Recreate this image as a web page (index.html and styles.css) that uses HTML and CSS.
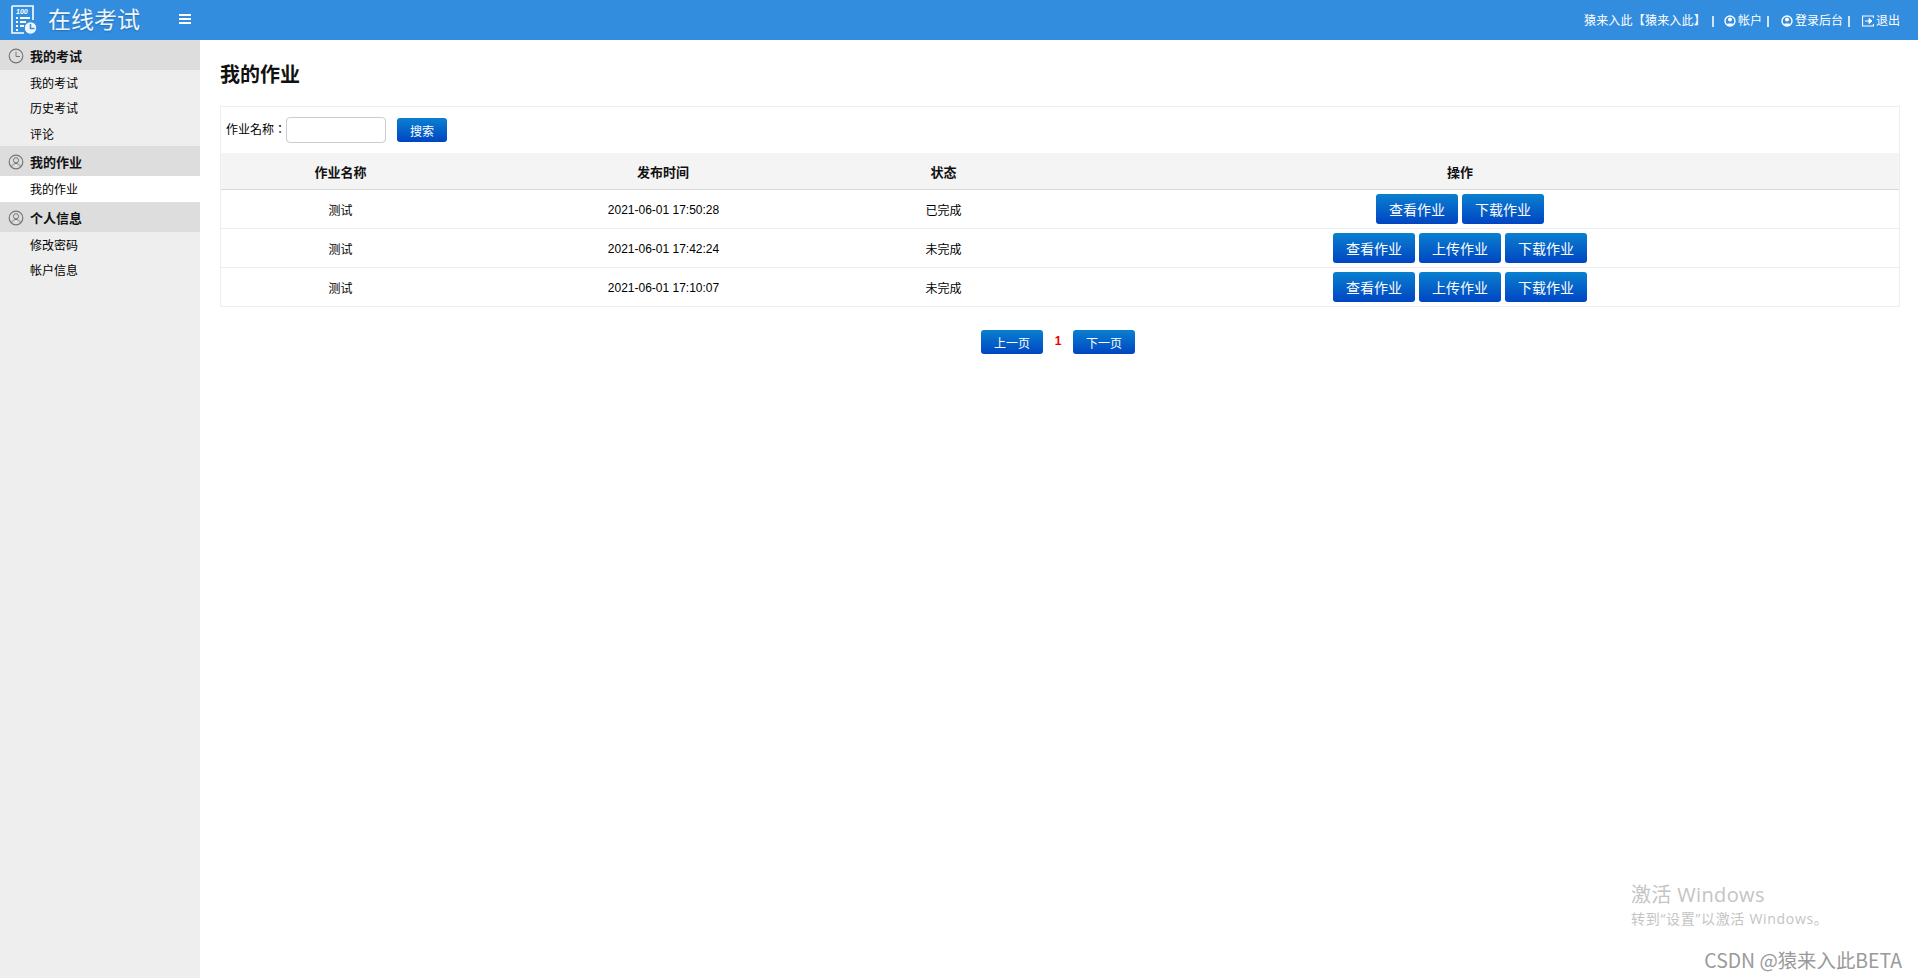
FILE: index.html
```html
<!DOCTYPE html>
<html lang="zh-CN">
<head>
<meta charset="utf-8">
<title>在线考试</title>
<link rel="stylesheet" href="styles.css">
</head>
<body>
<header class="topbar">
  <div class="brand">
    <svg class="logo" viewBox="0 0 26 30" width="26" height="30" aria-hidden="true">
      <path d="M1 1H22V15M13 28H1V1" fill="none" stroke="#fff" stroke-width="1.600"/>
      <text class="logo-score" x="5" y="9">100</text>
      <path d="M5 13h2M9 13h10M5 17h2M9 17h6M5 21h2M9 21h4M5 25h2" stroke="#fff" stroke-width="2" fill="none"/>
      <circle cx="19.500" cy="23" r="6.200" fill="#eef6fd" stroke="#338ddf" stroke-width="1"/>
      <path d="M19.500 19V23.500H23.500" fill="none" stroke="#338ddf" stroke-width="1.500"/>
    </svg>
    <span class="brand-name">在线考试</span>
    <svg class="menu-toggle" viewBox="0 0 12 10" width="12" height="10" aria-hidden="true">
      <path d="M0 1h12M0 5h12M0 9h12" stroke="#fff" stroke-width="2"/>
    </svg>
  </div>
  <nav class="userbar">
    <span class="user-name">猿来入此【猿来入此】</span><i class="sep"></i>
    <a><svg class="uicon" viewBox="0 0 12 12"><circle cx="6" cy="6" r="5" fill="none" stroke="#fff" stroke-width="1.400"/><circle cx="6" cy="4.500" r="2" fill="#fff"/><path d="M3.500 10.500V8.500h5v2" fill="#fff"/></svg>帐户</a><i class="sep near"></i>
    <a><svg class="uicon" viewBox="0 0 12 12"><circle cx="6" cy="6" r="5" fill="none" stroke="#fff" stroke-width="1.400"/><circle cx="6" cy="4.500" r="2" fill="#fff"/><path d="M3.500 10.500V8.500h5v2" fill="#fff"/></svg>登录后台</a><i class="sep near"></i>
    <a><svg class="uicon" viewBox="0 0 12 12"><path d="M11.500 3V1H.5V11H11.500V9" fill="none" stroke="#fff" stroke-width="1.200"/><path d="M3 6h5M7 3.500L10 6 7 8.500z" stroke="#fff" fill="#fff"/></svg>退出</a>
  </nav>
</header>
<div class="shell">
  <aside class="sidebar">
    <div class="side-head">
      <svg class="side-icon" viewBox="0 0 16 16"><circle cx="8" cy="8" r="6.800" fill="none" stroke="#777" stroke-width="1.200"/><path d="M8 3.500V8.500H12" fill="none" stroke="#777" stroke-width="1"/></svg>
      我的考试
    </div>
    <a class="side-item">我的考试</a>
    <a class="side-item">历史考试</a>
    <a class="side-item">评论</a>
    <div class="side-head">
      <svg class="side-icon" viewBox="0 0 16 16"><circle cx="8" cy="8" r="6.800" fill="none" stroke="#777" stroke-width="1.200"/><circle cx="8" cy="6.300" r="2.600" fill="none" stroke="#777" stroke-width="1"/><path d="M3.500 13c.6-2.300 2.500-3.500 4.500-3.500s3.900 1.200 4.500 3.500" fill="none" stroke="#777" stroke-width="1"/></svg>
      我的作业
    </div>
    <a class="side-item active">我的作业</a>
    <div class="side-head">
      <svg class="side-icon" viewBox="0 0 16 16"><circle cx="8" cy="8" r="6.800" fill="none" stroke="#777" stroke-width="1.200"/><circle cx="8" cy="6.300" r="2.600" fill="none" stroke="#777" stroke-width="1"/><path d="M3.500 13c.6-2.300 2.500-3.500 4.500-3.500s3.900 1.200 4.500 3.500" fill="none" stroke="#777" stroke-width="1"/></svg>
      个人信息
    </div>
    <a class="side-item">修改密码</a>
    <a class="side-item">帐户信息</a>
  </aside>
  <main class="content">
    <h1 class="title">我的作业</h1>
    <div class="panel">
      <form class="search">
        <label class="search-label" lang="zh-TW">作业名称：</label>
        <input class="search-input" type="text">
        <button class="btn btn-search" type="button">搜索</button>
      </form>
      <table class="grid">
        <colgroup>
          <col class="c-name"><col class="c-time"><col class="c-state"><col class="c-ops">
        </colgroup>
        <thead>
          <tr><th>作业名称</th><th>发布时间</th><th>状态</th><th>操作</th></tr>
        </thead>
        <tbody>
          <tr>
            <td>测试</td><td class="when">2021-06-01 17:50:28</td><td>已完成</td>
            <td class="ops"><div class="ops-row"><button class="btn btn-op" type="button">查看作业</button><button class="btn btn-op" type="button">下载作业</button></div></td>
          </tr>
          <tr>
            <td>测试</td><td class="when">2021-06-01 17:42:24</td><td>未完成</td>
            <td class="ops"><div class="ops-row"><button class="btn btn-op" type="button">查看作业</button><button class="btn btn-op" type="button">上传作业</button><button class="btn btn-op" type="button">下载作业</button></div></td>
          </tr>
          <tr>
            <td>测试</td><td class="when">2021-06-01 17:10:07</td><td>未完成</td>
            <td class="ops"><div class="ops-row"><button class="btn btn-op" type="button">查看作业</button><button class="btn btn-op" type="button">上传作业</button><button class="btn btn-op" type="button">下载作业</button></div></td>
          </tr>
        </tbody>
      </table>
    </div>
    <div class="pager">
      <button class="btn btn-page" type="button">上一页</button>
      <span class="page-no">1</span>
      <button class="btn btn-page" type="button">下一页</button>
    </div>
  </main>
</div>
<div class="activate">
  <div class="activate-title">激活 Windows</div>
  <div class="activate-sub">转到“设置”以激活 Windows。</div>
</div>
<div class="credit">CSDN @猿来入此BETA</div>
</body>
</html>
```
FILE: styles.css
```css
* { box-sizing: border-box; }
html, body { height: 100%; }
body {
  margin: 0;
  height: 978px;
  overflow: hidden;
  background: #fff;
  color: #000;
  font: 12px/1.5 "Liberation Sans", "Noto Sans CJK SC", sans-serif;
  display: flex;
  flex-direction: column;
}
.topbar {
  height: 40px;
  flex: none;
  background: #338ddf;
  color: #fff;
  display: flex;
  justify-content: space-between;
  align-items: center;
  padding: 0 18px 0 11px;
}
.brand { display: flex; align-items: center; }
.logo { margin-right: 11px; }
.logo-score { font: italic 700 7px "Liberation Sans", sans-serif; fill: #fff; }
.brand-name {
  font-size: 23px;
  line-height: 40px;
  width: 131px;
  color: #eef6fd;
  text-shadow: 0 1px 2px rgba(0,0,0,.25);
}
.menu-toggle { margin-top: -2px; }
.userbar { display: flex; align-items: center; font-size: 12px; line-height: 16px; padding-top: 2px; }
.userbar a { display: flex; align-items: center; color: #fff; }
.user-name { letter-spacing: .2px; }
.uicon { width: 12px; height: 12px; margin-right: 2px; }
.sep { width: 2px; height: 11px; background: #cfe6fa; margin: 0 10px 0 6px; }
.sep.near { margin: 0 12px 0 5px; }
.shell { flex: 1; display: flex; min-height: 0; }
.sidebar { width: 200px; flex: none; background: #eee; }
.side-head {
  height: 30px;
  background: #ddd;
  display: flex;
  align-items: center;
  padding: 3px 0 0 8px;
  font-size: 13px;
  font-weight: 700;
  color: #111;
}
.side-icon { width: 16px; height: 16px; margin: -1px 6px 0 0; }
.side-item {
  display: block;
  height: 25.33px;
  line-height: 25px;
  padding: 2px 0 0 30px;
}
.side-item.active { background: #fff; height: 26px; }
.content { flex: 1; padding: 0 18px 0 20px; min-width: 0; }
.title {
  margin: 0;
  height: 66px;
  padding-top: 21px;
  font-size: 20px;
  line-height: 28px;
  font-weight: 700;
  color: #111;
}
.panel { border: 1px solid #eee; }
.search {
  height: 46px;
  display: flex;
  align-items: center;
  padding-left: 5px;
  margin: 0;
}
.search-label { white-space: nowrap; font-family: "Liberation Sans", "Noto Sans CJK TC", sans-serif; }
.search-input {
  width: 100px;
  height: 26px;
  border: 1px solid #ccc;
  border-radius: 4px;
  background: #fff;
  margin: 0 11px 0 0;
  padding: 0 4px;
}
.btn {
  border: 0;
  padding: 0;
  color: #fff;
  font-family: inherit;
  border-radius: 3px;
  background: linear-gradient(#0a80cf, #0045c2);
  cursor: pointer;
}
.btn-search { width: 50px; height: 24px; font-size: 12px; }
.grid { width: 100%; border-collapse: separate; border-spacing: 0; table-layout: fixed; }
.c-name { width: 239px; }
.c-time { width: 406px; }
.c-state { width: 155px; }
.grid th {
  height: 37px;
  background: #f4f4f4;
  border-bottom: 1px solid #d9d9d9;
  font-size: 13px;
  font-weight: 700;
  color: #111;
  text-align: center;
  padding: 3px 0 0;
}
.grid td {
  height: 39px;
  border-bottom: 1px solid #eee;
  text-align: center;
  padding: 3px 0 0;
}
.grid tbody tr:last-child td { border-bottom: 0; height: 38px; }
.grid td.when { padding-top: 2px; padding-left: 1px; }
.grid td.ops { padding: 0; }
.ops-row { display: flex; justify-content: center; gap: 4px; }
.btn-op { width: 82px; height: 30px; font-size: 14px; padding-bottom: 1px; }
.pager {
  display: flex;
  justify-content: center;
  align-items: center;
  margin-top: 23px;
  padding-right: 4px;
}
.btn-page { width: 62px; height: 24px; font-size: 12px; }
.page-no { width: 30px; text-align: center; color: #e00; font-weight: 700; margin-top: -3px; }
.activate {
  position: absolute;
  left: 1631px;
  top: 880px;
  color: #c4c4c4;
}
.activate-title { font-size: 20px; line-height: 30px; letter-spacing: .35px; font-family: "Open Sans", "Noto Sans CJK SC", sans-serif; }
.activate-sub { font-size: 14px; line-height: 18px; letter-spacing: .7px; font-family: "Open Sans", "Noto Sans CJK SC", sans-serif; }
.credit {
  position: absolute;
  right: 16px;
  top: 946px;
  font-size: 19.4px;
  line-height: 28px;
  color: #9a9a9a;
  font-family: "Noto Sans CJK SC", sans-serif;
}
```
